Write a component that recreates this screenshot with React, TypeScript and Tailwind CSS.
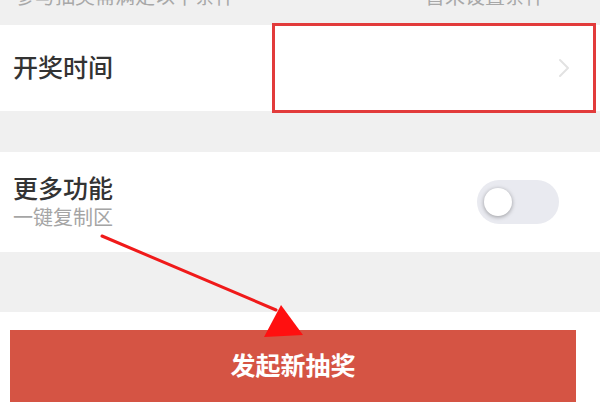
import React from 'react';

const App = () => {
  return (
    <div
      className="relative w-[600px] h-[416px] overflow-hidden bg-[#f0f0f0]"
      style={{ fontFamily: '"Noto Sans", "Noto Sans CJK SC", sans-serif' }}
    >
      {/* cut-off row above */}
      <div className="h-[25px] overflow-hidden flex justify-between pl-[15px] pr-[55px]">
        <span className="text-[20px] leading-none -mt-[13px] text-[#a8a8a8]">参与抽奖需满足以下条件</span>
        <span className="text-[20px] leading-none -mt-[13px] text-[#a8a8a8]">暂未设置条件</span>
      </div>

      <div className="h-[86px] bg-white flex items-center justify-between pl-[13px] pr-[30px]">
        <span className="text-[25px] font-medium text-[#333]">开奖时间</span>
        <svg width="12" height="20" viewBox="0 0 12 20" fill="none">
          <path d="M2 2l8 8-8 8" stroke="#e2e2e2" strokeWidth="2" strokeLinecap="round" strokeLinejoin="round" />
        </svg>
      </div>

      <div className="h-[41px]" />

      <div className="h-[100px] bg-white flex items-center justify-between pl-[13px] pr-[41px]">
        <div className="flex flex-col">
          <span className="text-[25px] leading-[32px] font-medium text-[#333]">更多功能</span>
          <span className="text-[20px] leading-[28px] text-[#a5a5a5]">一键复制区</span>
        </div>
        <div className="w-[82px] h-[44px] rounded-full bg-[#e9eaf0] flex items-center pl-[7px]">
          <div className="w-[28px] h-[28px] rounded-full bg-white shadow-[0_1px_4px_rgba(0,0,0,0.35)]" />
        </div>
      </div>

      <div className="h-[60px]" />

      <div className="h-[104px] bg-white pt-[18px]">
        <button className="ml-[10px] w-[566px] h-[72px] bg-[#d55444] text-white text-[25px] font-bold flex items-center justify-center">
          发起新抽奖
        </button>
      </div>

      {/* annotation box */}
      <div className="absolute left-[272px] top-[23px] w-[324px] h-[90px] border-[3px] border-[#e23b3b]" />

      {/* annotation arrow */}
      <svg className="absolute left-0 top-0" width="600" height="416" viewBox="0 0 600 416">
        <line x1="102" y1="236" x2="276" y2="310" stroke="#f01a1a" strokeWidth="3" strokeLinecap="round" />
        <polygon points="281,305 264,337 303,335" fill="#ff1010" />
      </svg>
    </div>
  );
};

export default App;
